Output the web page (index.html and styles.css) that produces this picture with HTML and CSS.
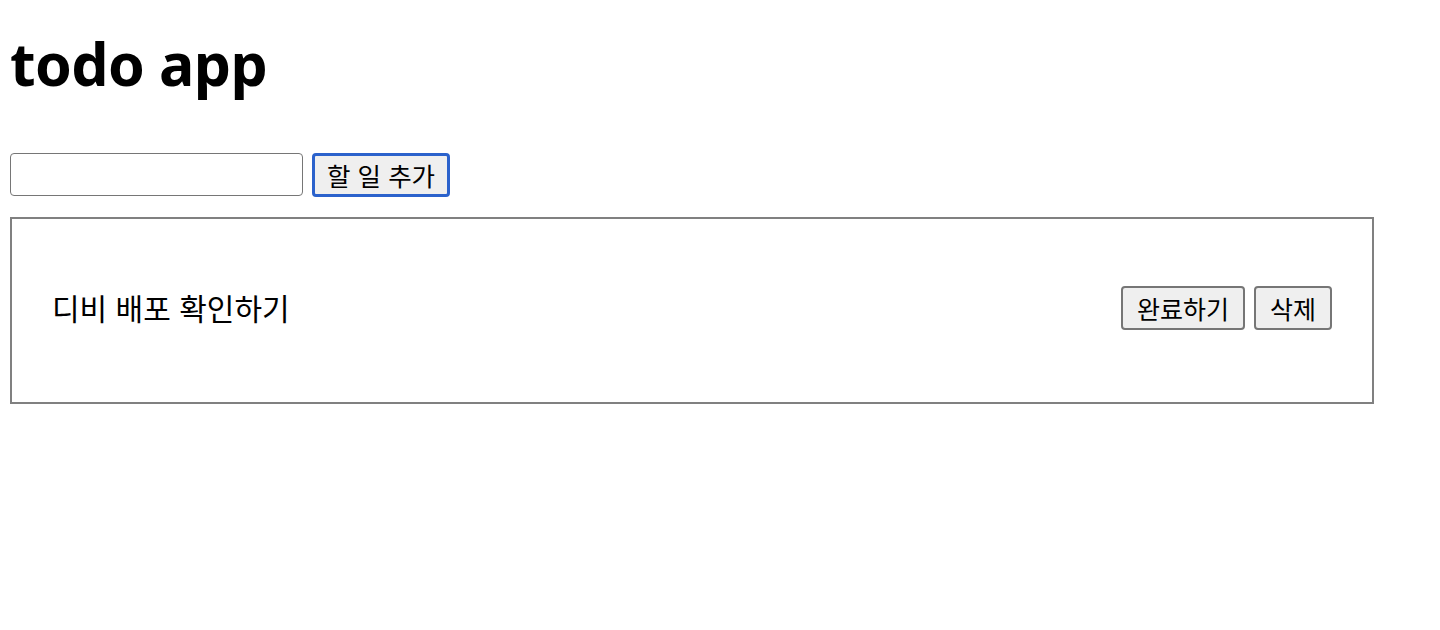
FILE: index.html
```html
<!DOCTYPE html>
<html lang="ko">
<head>
<meta charset="utf-8">
<title>todo app</title>
<link rel="stylesheet" href="styles.css">
</head>
<body>
<div class="app">
  <h1 class="title">todo app</h1>
  <form class="add-form">
    <input class="add-input" type="text">
    <button class="btn btn-add" type="button">할 일 추가</button>
  </form>
  <ul class="todo-list">
    <li class="todo-item">
      <span class="todo-text">디비 배포 확인하기</span>
      <div class="todo-actions">
        <button class="btn btn-small" type="button">완료하기</button>
        <button class="btn btn-small" type="button">삭제</button>
      </div>
    </li>
  </ul>
</div>
</body>
</html>
```
FILE: styles.css
```css
html, body {
  margin: 0;
  padding: 0;
  background: #ffffff;
}
body {
  font-family: "Noto Sans", "Noto Sans CJK KR", sans-serif;
  color: #000;
}
.app {
  padding: 0 10px;
}
.title {
  margin: 0;
  padding-top: 23px;
  height: 153px;
  box-sizing: border-box;
  font-size: 59px;
  line-height: 80px;
  font-weight: 700;
  letter-spacing: -0.6px;
}
.add-form {
  display: flex;
  gap: 9px;
  margin: 0 0 20px 0;
  height: 44px;
  align-items: flex-start;
}
.add-input {
  width: 293px;
  height: 43px;
  box-sizing: border-box;
  border: 1.5px solid #767676;
  border-radius: 4px;
  margin: 0;
  padding: 0 4px;
  font-size: 20px;
}
.btn {
  font-family: "Noto Sans CJK KR", sans-serif;
  background: #efefef;
  color: #000;
  border: 2px solid #767676;
  border-radius: 4px;
  margin: 0;
  box-sizing: border-box;
  padding: 0;
  cursor: pointer;
}
.btn-add {
  width: 138px;
  height: 44px;
  border: 3px solid #2b62cc;
  font-size: 25.5px;
  line-height: 1;
}
.todo-list {
  list-style: none;
  margin: 0;
  padding: 0;
  width: 1364px;
}
.todo-item {
  display: flex;
  align-items: center;
  justify-content: space-between;
  height: 187px;
  box-sizing: border-box;
  border: 2px solid #808080;
  padding: 0 40px 0 40px;
}
.todo-text {
  font-family: "Noto Sans CJK KR", sans-serif;
  font-size: 30px;
  line-height: 40px;
  margin-top: -8px;
}
.todo-actions {
  display: flex;
  gap: 9px;
  margin-top: -5px;
}
.btn-small {
  height: 44px;
  font-size: 25px;
  line-height: 1;
}
.btn-small:first-child {
  width: 124px;
}
.btn-small:last-child {
  width: 78px;
}
```
